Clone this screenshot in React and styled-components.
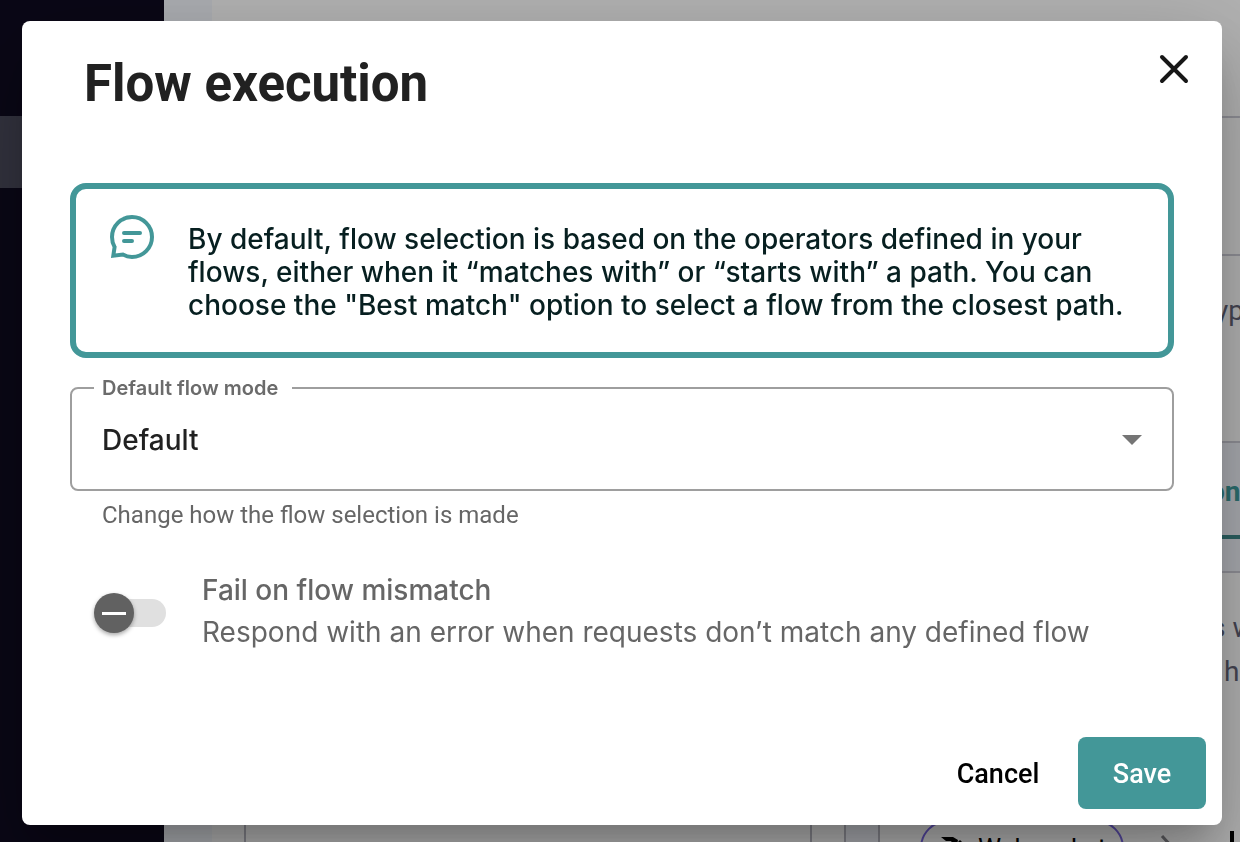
import React from "react";
import styled, { createGlobalStyle } from "styled-components";

const teal = "#439798";
const ui = `Roboto, "Liberation Sans", sans-serif`;
const wide = `Inter, Roboto, sans-serif`;

const Global = createGlobalStyle`
  *, *::before, *::after { box-sizing: border-box; }
  body { margin: 0; font-family: ${ui}; background: #b2b2b2; }
`;

/* Dimmed page behind the dialog */
const Page = styled.div`
  display: flex;
  height: 100vh;
  overflow: hidden;
  background: #b2b2b2;
`;
const Sidebar = styled.nav`
  flex: none;
  width: 164px;
  padding-top: 116px;
  background: #0a0716;
`;
const SidebarItem = styled.div`
  height: 72px;
  background: #33333f;
`;
const Gutter = styled.div`
  flex: none;
  width: 48px;
  background: #abadb1;
`;
const Main = styled.main`
  flex: 1;
  min-width: 0;
  display: flex;
  flex-direction: column;
`;
const Band = styled.div`
  flex: none;
  height: ${(p) => p.$height}px;
  padding-top: ${(p) => p.$top || 0}px;
  border-bottom: ${(p) => (p.$line ? "2px solid #8f8f96" : "0")};
  background: ${(p) => (p.$tinted ? "#a9abb0" : "transparent")};
`;
const EdgeText = styled.div`
  width: ${(p) => p.$width}px;
  margin-left: auto;
  overflow: hidden;
  white-space: nowrap;
  font-size: 28px;
  line-height: 44px;
  font-weight: ${(p) => (p.$active ? 700 : 400)};
  color: ${(p) => (p.$active ? "#2b6d6e" : "#454552")};
`;
const TabLine = styled.div`
  height: 4px;
  margin-top: 21px;
  background: #2b6061;
`;
const Canvas = styled.div`
  flex: 1;
  min-height: 0;
  display: flex;
  align-items: stretch;
  padding-left: 32px;
`;
const Panel = styled.div`
  flex: 1;
  border: solid #818188;
  border-width: 0 2px;
`;
const Splitter = styled.div`
  flex: none;
  width: 36px;
  margin: 0 40px 0 32px;
  border: solid #818188;
  border-width: 0 2px;
  background: #a9abb0;
`;
const Steps = styled.div`
  flex: none;
  width: 320px;
  display: flex;
  align-items: flex-start;
  padding-top: 20px;
`;
const Chip = styled.div`
  flex: none;
  display: flex;
  align-items: center;
  gap: 12px;
  width: 204px;
  height: 56px;
  padding-left: 18px;
  border: 2px solid #5548a0;
  border-radius: 28px;
  font-size: 26px;
  line-height: 32px;
  color: #000;
`;
const Chevron = styled.svg`
  flex: none;
  margin: 14px 0 0 36px;
`;
const StepBar = styled.div`
  width: 4px;
  height: 40px;
  margin: 11px 6px 0 auto;
  background: #000;
`;

/* Dialog */
const Overlay = styled.div`
  position: fixed;
  inset: 0;
  display: flex;
  align-items: flex-start;
  padding: 21px 18px 17px 22px;
`;
const Dialog = styled.section`
  flex: 1;
  min-width: 0;
  background: #fff;
  border-radius: 8px;
  box-shadow: 0 22px 30px -14px rgba(0, 0, 0, 0.2), 0 48px 76px 6px rgba(0, 0, 0, 0.14),
    0 18px 92px 16px rgba(0, 0, 0, 0.12);
`;
const Header = styled.header`
  display: flex;
  justify-content: space-between;
  align-items: flex-start;
  padding: 31px 24px 0 62px;
`;
const Title = styled.h1`
  margin: 0;
  font-size: 51px;
  line-height: 64px;
  font-weight: 700;
  color: #212121;
`;
const CloseButton = styled.button`
  display: grid;
  place-items: center;
  width: 48px;
  height: 48px;
  margin-top: -7px;
  padding: 0;
  border: 0;
  background: none;
`;
const Content = styled.div`
  padding: 67px 48px 0;
`;
const Notice = styled.div`
  display: flex;
  gap: 34px;
  padding: 26px 34px 30px;
  border: 6px solid ${teal};
  border-radius: 16px;
`;
const NoticeIcon = styled.svg`
  flex: none;
`;
const NoticeText = styled.p`
  margin: 8px 0 0;
  font-family: ${wide};
  font-size: 28px;
  line-height: 33px;
  font-weight: 500;
  color: #071f20;
`;
const Field = styled.fieldset`
  display: grid;
  align-items: center;
  min-width: 0;
  margin: 18px 0 0;
  padding: 0 0 9px;
  border: 2px solid #9e9e9e;
  border-radius: 8px;
`;
const FieldLabel = styled.legend`
  margin-left: 22px;
  padding: 0 14px 0 8px;
  font-family: ${wide};
  font-size: 20px;
  line-height: 24px;
  font-weight: 600;
  color: #6b6b6b;
`;
const Select = styled.select`
  grid-area: 1 / 1;
  appearance: none;
  width: 100%;
  height: 80px;
  padding: 0 80px 0 30px;
  border: 0;
  background: none;
  font-family: ${wide};
  font-size: 28px;
  font-weight: 500;
  color: #212121;
`;
const Arrow = styled.svg`
  grid-area: 1 / 1;
  justify-self: end;
  margin-right: 30px;
  pointer-events: none;
`;
const Hint = styled.p`
  margin: 8px 32px 0;
  font-size: 24px;
  line-height: 32px;
  color: #666;
`;
const ToggleRow = styled.label`
  display: flex;
  align-items: center;
  gap: 36px;
  margin: 38px 24px 0;
`;
const Switch = styled.input`
  flex: none;
  appearance: none;
  display: grid;
  align-items: center;
  width: 72px;
  height: 40px;
  margin: 4px 0 0;

  &::before {
    content: "";
    grid-area: 1 / 1;
    height: 28px;
    margin-left: 4px;
    border-radius: 14px;
    background: #e0e0e0;
  }
  &::after {
    content: "";
    grid-area: 1 / 1;
    width: 40px;
    height: 40px;
    border-radius: 50%;
    background: linear-gradient(#fff, #fff) center / 24px 3px no-repeat #616161;
    box-shadow: 0 2px 4px rgba(0, 0, 0, 0.35);
  }
  &:checked::after {
    justify-self: end;
  }
`;
const ToggleText = styled.span`
  display: flex;
  flex-direction: column;
  font-family: ${wide};
  font-size: 28px;
  line-height: 42px;
  color: #666;
`;
const ToggleTitle = styled.span`
  font-weight: 500;
`;
const Actions = styled.footer`
  display: flex;
  justify-content: flex-end;
  gap: 16px;
  padding: 84px 16px 16px;
`;
const Button = styled.button`
  min-width: 128px;
  height: 72px;
  padding: 2px 20px 0;
  border: 0;
  border-radius: 8px;
  font-family: ${ui};
  font-size: 27px;
  font-weight: 500;
  color: ${(p) => (p.$primary ? "#fff" : "#000")};
  background: ${(p) => (p.$primary ? teal : "transparent")};
`;

export default function App() {
  return (
    <>
      <Global />
      <Page aria-hidden="true">
        <Sidebar>
          <SidebarItem />
        </Sidebar>
        <Gutter />
        <Main>
          <Band $height={118} $line />
          <Band $height={138} $line />
          <Band $height={187} $top={33} $line>
            <EdgeText $width={25}>yp</EdgeText>
          </Band>
          <Band $height={130} $top={27} $line $tinted>
            <EdgeText $width={31} $active>on</EdgeText>
            <TabLine />
          </Band>
          <Band $height={227} $top={33}>
            <EdgeText $width={29}>s w</EdgeText>
            <EdgeText $width={16}>h</EdgeText>
          </Band>
          <Canvas>
            <Panel />
            <Splitter />
            <Steps>
              <Chip>
                <svg width="26" height="26" viewBox="0 0 26 26">
                  <path d="M1 2h12l5 3-1 4h-4l-2-3H6zM20 5l3 3-3 3-3-3zM6 12l14 1-4 9H8z" fill="#000" />
                </svg>
                Websocket
              </Chip>
              <Chevron width="16" height="28" viewBox="0 0 16 28">
                <path d="M2 2l11 12L2 26" fill="none" stroke="#5c5c60" strokeWidth="3" />
              </Chevron>
              <StepBar />
            </Steps>
          </Canvas>
        </Main>
      </Page>

      <Overlay>
        <Dialog role="dialog" aria-modal="true" aria-labelledby="dialog-title">
          <Header>
            <Title id="dialog-title">Flow execution</Title>
            <CloseButton type="button" aria-label="Close">
              <svg width="30" height="30" viewBox="0 0 30 30">
                <path d="M3 3l24 24M27 3L3 27" stroke="#171717" strokeWidth="4" strokeLinecap="round" />
              </svg>
            </CloseButton>
          </Header>
          <Content>
            <Notice>
              <NoticeIcon width="44" height="44" viewBox="0 0 44 44" fill="none" stroke={teal} strokeWidth="4" strokeLinecap="round">
                <path d="M3.3 40.7L4.6 32C2.8 29 2 25.7 2 22a20 20 0 1 1 20 20c-3.6 0-6.5-.9-9.2-2.5z" strokeLinejoin="miter" />
                <path d="M14 18h16M14 26h8" />
              </NoticeIcon>
              <NoticeText>
                By default, flow selection is based on the operators defined in your flows, either when
                it “matches with” or “starts with” a path. You can choose the "Best match" option to
                select a flow from the closest path.
              </NoticeText>
            </Notice>
            <Field>
              <FieldLabel>
                <label htmlFor="flow-mode">Default flow mode</label>
              </FieldLabel>
              <Select id="flow-mode" aria-describedby="flow-mode-hint" defaultValue="default">
                <option value="default">Default</option>
                <option value="best">Best match</option>
              </Select>
              <Arrow width="20" height="10" viewBox="0 0 20 10">
                <path d="M0 0h20L10 10z" fill="#757575" />
              </Arrow>
            </Field>
            <Hint id="flow-mode-hint">Change how the flow selection is made</Hint>
            <ToggleRow>
              <Switch type="checkbox" role="switch" />
              <ToggleText>
                <ToggleTitle>Fail on flow mismatch</ToggleTitle>
                <span>Respond with an error when requests don’t match any defined flow</span>
              </ToggleText>
            </ToggleRow>
          </Content>
          <Actions>
            <Button type="button">Cancel</Button>
            <Button type="button" $primary>Save</Button>
          </Actions>
        </Dialog>
      </Overlay>
    </>
  );
}
